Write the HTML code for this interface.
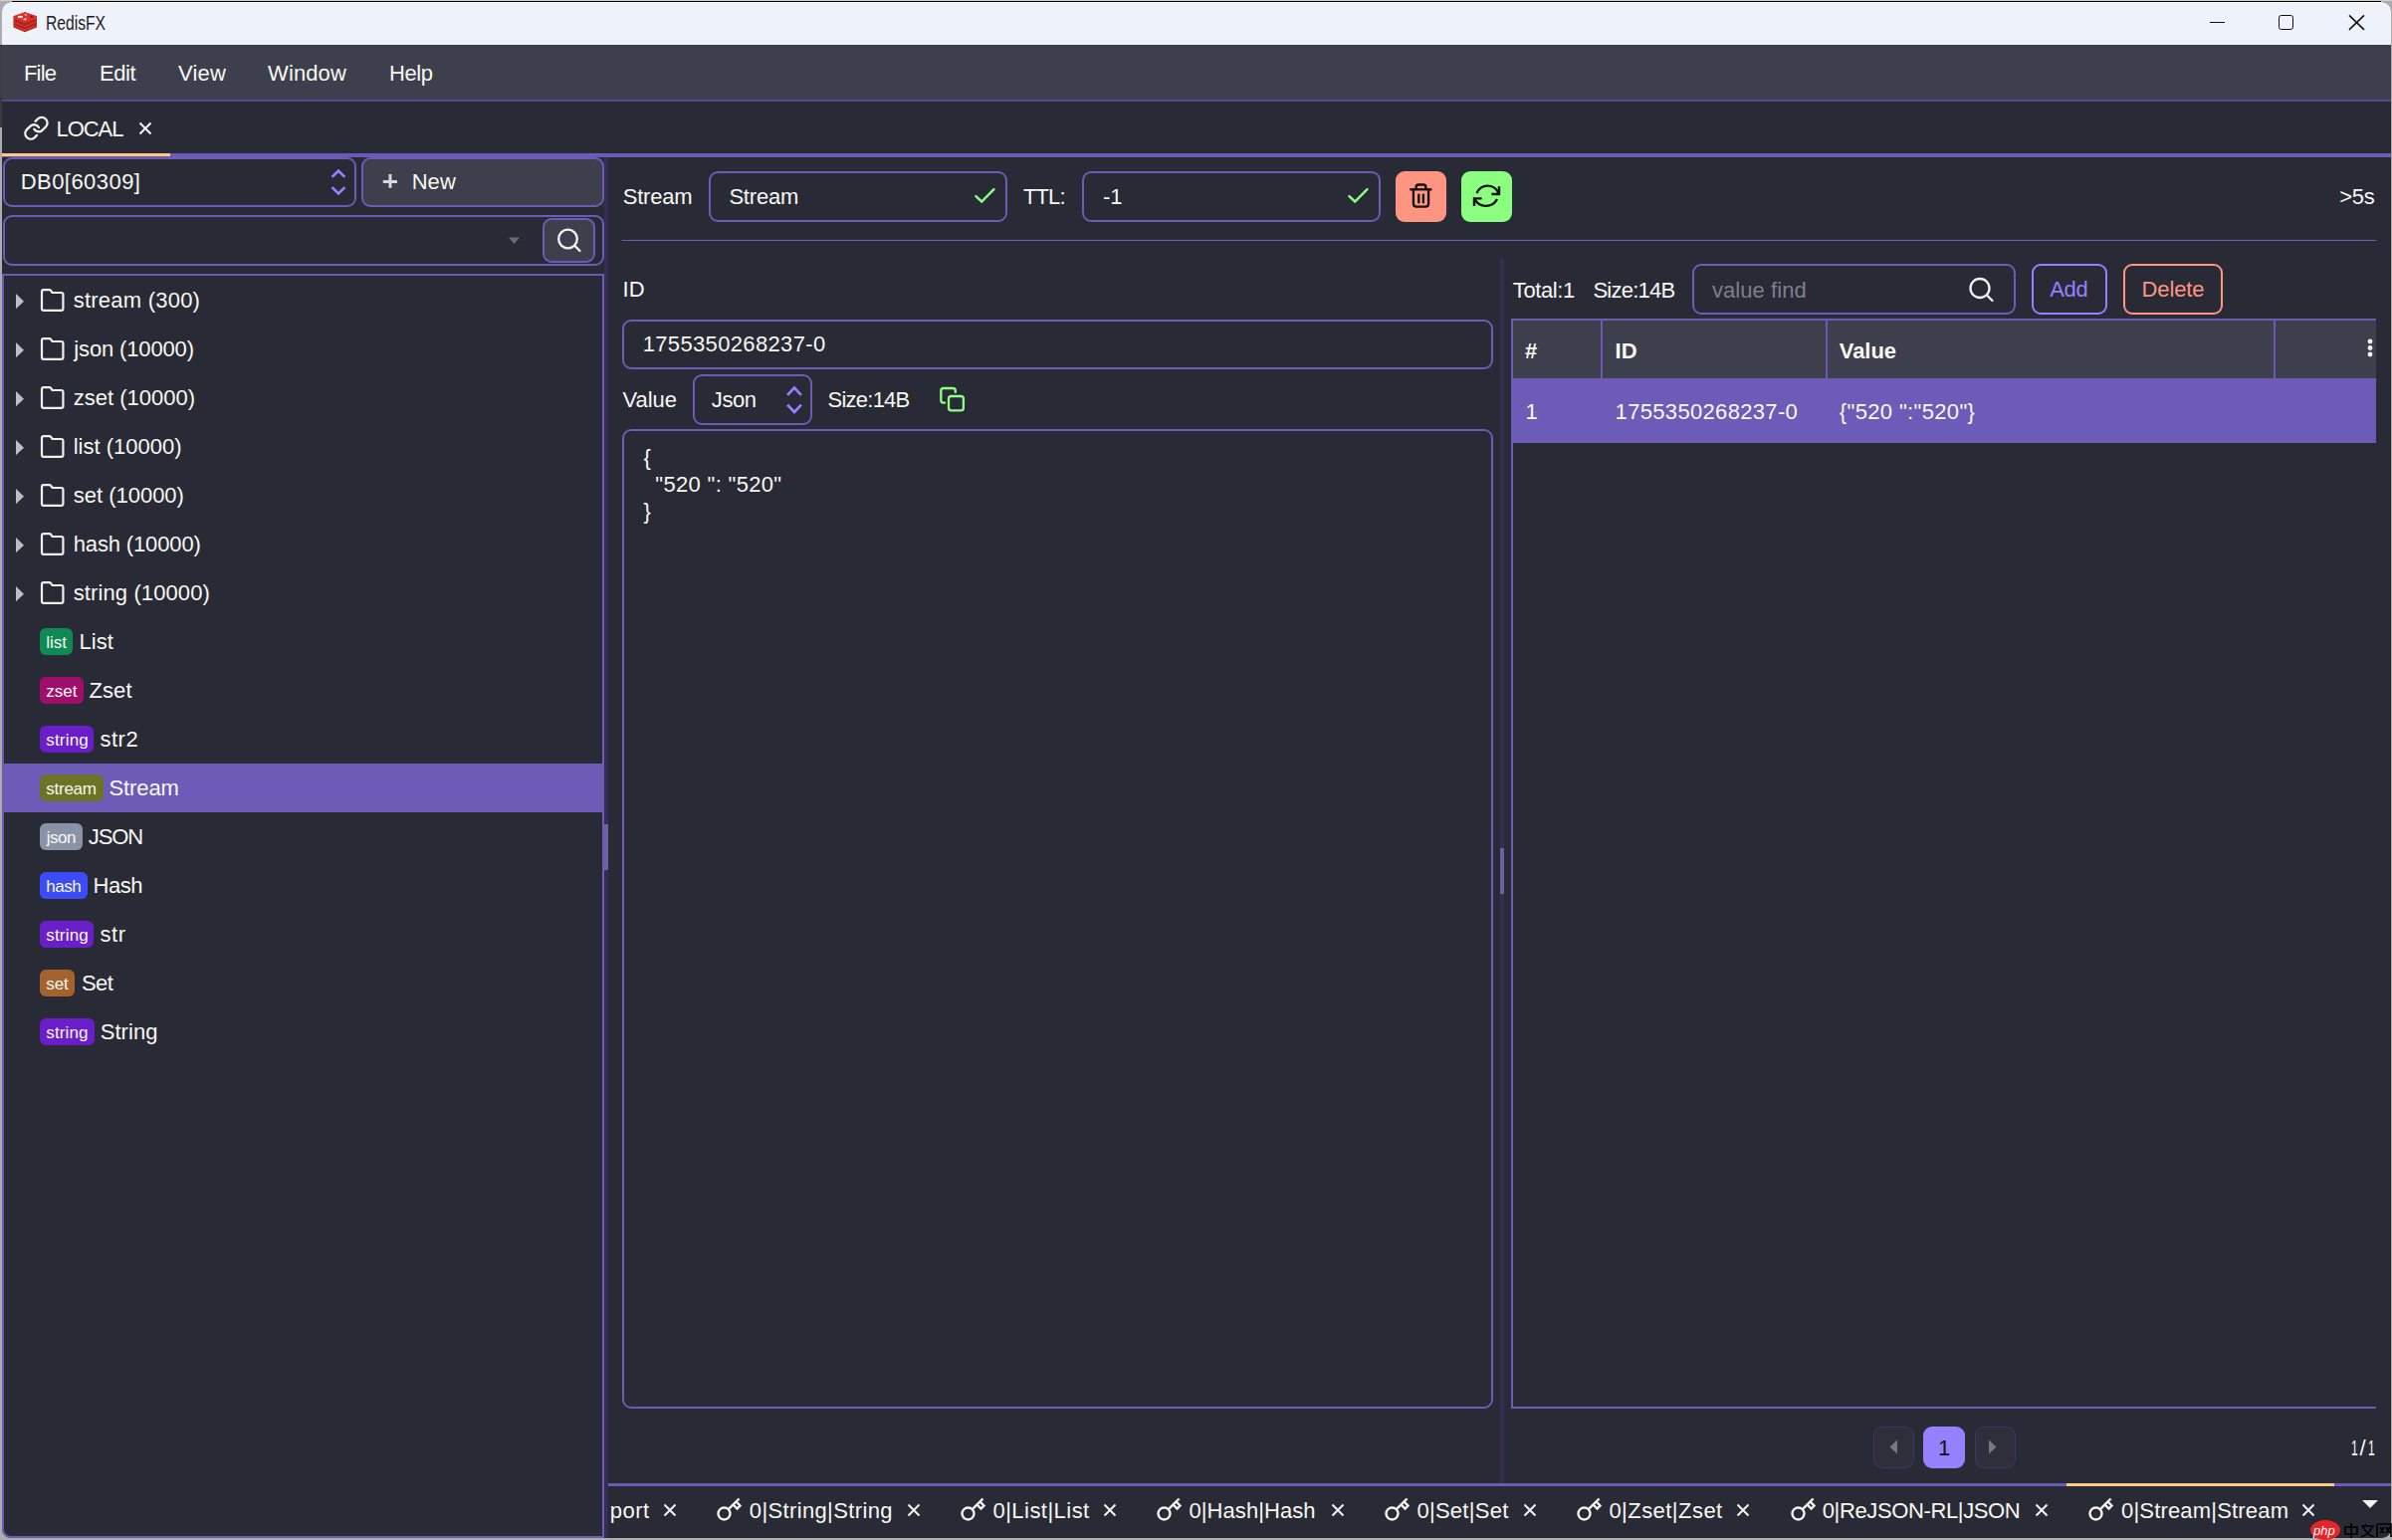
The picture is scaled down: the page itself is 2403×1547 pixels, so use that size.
<!DOCTYPE html>
<html><head><meta charset="utf-8"><title>RedisFX</title>
<style>
html,body{margin:0;padding:0;}
body{width:2403px;height:1547px;overflow:hidden;position:relative;background:#adadad;font-family:"Liberation Sans",sans-serif;}
.t{position:absolute;white-space:pre;line-height:1;}
.r{position:absolute;box-sizing:border-box;}
.s{position:absolute;overflow:visible;}
</style></head><body>
<div class="r" style="left:2px;top:2px;width:2400px;height:1543px;background:#282a36;border-radius:9px;"></div>
<div class="r" style="left:0.00px;top:0.00px;width:2403.00px;height:1.00px;background:#d0d0d0;"></div>
<div class="r" style="left:0.00px;top:45.00px;width:2.00px;height:83.00px;background:#3b3b3d;"></div>
<div class="r" style="left:2px;top:2px;width:2400px;height:43px;background:#eef2fa;border-radius:9px 9px 0 0;"></div>
<div class="r" style="left:12.00px;top:1.00px;width:2380.00px;height:1.00px;background:#000;"></div>
<div class="r" style="left:12.00px;top:2.00px;width:2380.00px;height:1.00px;background:#ffffff;"></div>
<svg class="s" style="left:10.00px;top:8.00px;" width="32" height="28" viewBox="0 0 32 28"><g>
<polygon points="3.6,8.2 15,4.2 26.9,8.2 26.9,19.6 15,24.2 3.6,19.6" fill="#a82322"/>
<polygon points="3.6,8.2 15,4.2 26.9,8.2 26.9,10.8 15,15.2 3.6,10.8" fill="#dc3229"/>
<polygon points="3.6,12.8 15,17.4 26.9,12.8 26.9,14.8 15,19.4 3.6,14.8" fill="#d62e28"/>
<polygon points="3.6,16.6 15,21.2 26.9,16.6 26.9,18.6 15,23.2 3.6,18.6" fill="#d62e28"/>
<ellipse cx="10.4" cy="8.9" rx="2.6" ry="1.1" fill="#fff"/>
<polygon points="14.2,6.2 17.1,6.5 16,7.9" fill="#fbe4e4"/>
<polygon points="12.7,11.3 16.9,10.2 15.8,12.5" fill="#fff"/>
<circle cx="21.7" cy="8.9" r="1.1" fill="#7a1512"/>
</g></svg>
<div class="t" style="left:46.00px;top:12.77px;font-size:20px;letter-spacing:0.000px;color:#1e1e1e;transform:scaleX(0.7818);transform-origin:0.00px 0;">RedisFX</div>
<div class="r" style="left:2220.00px;top:22.00px;width:15.00px;height:1.00px;background:#111;"></div>
<div class="r" style="left:2289px;top:15px;width:15px;height:15px;border:1.9px solid #111;border-radius:2.8px;box-sizing:border-box"></div>
<svg class="s" style="left:2358.00px;top:13.00px;" width="20" height="20" viewBox="0 0 20 20"><path d="M2 2.4 L17 16.9 M17 2.4 L2 16.9" stroke="#111" stroke-width="1.5"/></svg>
<div class="r" style="left:2.00px;top:45.00px;width:2400.00px;height:55.00px;background:#3d3f4d;"></div>
<div class="r" style="left:2.00px;top:100.00px;width:2400.00px;height:2.00px;background:#54488a;"></div>
<div class="t" style="left:24.00px;top:63.08px;font-size:22px;letter-spacing:-0.833px;color:#f8f8f2;">File</div>
<div class="t" style="left:100.00px;top:63.08px;font-size:22px;letter-spacing:-0.458px;color:#f8f8f2;">Edit</div>
<div class="t" style="left:179.00px;top:63.08px;font-size:22px;letter-spacing:0.208px;color:#f8f8f2;">View</div>
<div class="t" style="left:269.00px;top:63.08px;font-size:22px;letter-spacing:0.125px;color:#f8f8f2;">Window</div>
<div class="t" style="left:391.00px;top:63.08px;font-size:22px;letter-spacing:-0.417px;color:#f8f8f2;">Help</div>
<div class="r" style="left:2.00px;top:154.00px;width:2400.00px;height:4.00px;background:#6b5bb6;"></div>
<div class="r" style="left:2.00px;top:154.00px;width:169.00px;height:3.00px;background:#ffca80;"></div>
<svg class="s" style="left:18.00px;top:110.00px;" width="40" height="36" viewBox="0 0 40 36"><g fill="none" stroke="#f4f4ee" stroke-width="2.3" stroke-linecap="round">
<path d="M17.5 11.8 L19.9 9.5 A5.6 5.6 0 0 1 27.9 17.5 L24.1 21.2 A5.5 5.5 0 0 1 16.2 19.7"/>
<path d="M21 18 A5.5 5.5 0 0 0 12.6 16.6 L8.7 20.4 A5.6 5.6 0 0 0 16.6 28.3 L19 25.9"/></g></svg>
<div class="t" style="left:56.50px;top:119.48px;font-size:22px;letter-spacing:-1.056px;color:#f8f8f2;">LOCAL</div>
<svg class="s" style="left:138.00px;top:121.00px;" width="16" height="16" viewBox="0 0 16 16"><path d="M2.5 2.5 L13.5 13.5 M13.5 2.5 L2.5 13.5" stroke="#f4f4ee" stroke-width="2"/></svg>
<div class="r" style="left:2.50px;top:158.00px;width:355.50px;height:49.80px;background:#282a36;border:2px solid #6b5bb6;border-radius:9px;"></div>
<div class="t" style="left:20.70px;top:172.28px;font-size:22px;letter-spacing:0.450px;color:#f8f8f2;">DB0[60309]</div>
<svg class="s" style="left:330.00px;top:167.00px;" width="20" height="32" viewBox="0 0 20 32"><g fill="none" stroke="#9580ff" stroke-width="2.6" stroke-linecap="square"><path d="M4.5 10 L10 4.5 L15.5 10"/><path d="M4.5 22 L10 27.5 L15.5 22"/></g></svg>
<div class="r" style="left:363.00px;top:158.00px;width:244.00px;height:49.80px;background:#3d3f4d;border:2px solid #6b5bb6;border-radius:9px;"></div>
<svg class="s" style="left:383.00px;top:174.00px;" width="18" height="18" viewBox="0 0 18 18"><path d="M9 1 V14.8 M1.8 8.6 H16" stroke="#d8d8d6" stroke-width="3"/></svg>
<div class="t" style="left:413.70px;top:172.08px;font-size:22px;letter-spacing:0.037px;color:#f8f8f2;">New</div>
<div class="r" style="left:2.50px;top:216.00px;width:604.50px;height:50.50px;background:#282a36;border:2px solid #6b5bb6;border-radius:9px;"></div>
<svg class="s" style="left:508.00px;top:236.00px;" width="18" height="12" viewBox="0 0 18 12"><path d="M3 2.5 L14 2.5 L8.5 9Z" fill="#6a6a72"/></svg>
<div class="r" style="left:545.00px;top:219.30px;width:53.00px;height:44.70px;background:#3d3f4d;border:2px solid #6b5bb6;border-radius:9px;"></div>
<svg class="s" style="left:556.00px;top:226.00px;" width="30" height="30" viewBox="0 0 30 30"><g fill="none" stroke="#f4f4ee" stroke-width="2.3"><circle cx="14.5" cy="14" r="9.3"/><path d="M21.5 21 L26.5 26" stroke-linecap="round"/></g></svg>
<div class="r" style="left:2px;top:275px;width:605px;height:1270px;border:2px solid #6b5bb6;border-radius:0 0 0 9px;box-sizing:border-box"></div>
<div class="r" style="left:607.00px;top:158.00px;width:4.00px;height:1387.00px;background:#332e52;"></div>
<div class="r" style="left:607.00px;top:828.00px;width:4.00px;height:46.00px;background:#6a62a2;"></div>
<svg class="s" style="left:14.00px;top:294.00px;" width="12" height="18" viewBox="0 0 12 18"><path d="M2 1 L10 8.8 L2 16.2Z" fill="#bdbdc5"/></svg>
<svg class="s" style="left:39.30px;top:289.00px;" width="27" height="25" viewBox="0 0 27 25"><path d="M3 4 Q3 2.2 4.8 2.2 L10.5 2.2 Q11.6 2.2 12.3 3.2 L13.6 5 L22.5 5 Q24.4 5 24.4 7 L24.4 21 Q24.4 22.8 22.5 22.8 L4.8 22.8 Q3 22.8 3 21Z" fill="none" stroke="#f0f0ea" stroke-width="2.2" stroke-linejoin="round"/></svg>
<div class="t" style="left:73.70px;top:291.08px;font-size:22px;letter-spacing:0.232px;color:#f8f8f2;">stream (300)</div>
<svg class="s" style="left:14.00px;top:343.00px;" width="12" height="18" viewBox="0 0 12 18"><path d="M2 1 L10 8.8 L2 16.2Z" fill="#bdbdc5"/></svg>
<svg class="s" style="left:39.30px;top:338.00px;" width="27" height="25" viewBox="0 0 27 25"><path d="M3 4 Q3 2.2 4.8 2.2 L10.5 2.2 Q11.6 2.2 12.3 3.2 L13.6 5 L22.5 5 Q24.4 5 24.4 7 L24.4 21 Q24.4 22.8 22.5 22.8 L4.8 22.8 Q3 22.8 3 21Z" fill="none" stroke="#f0f0ea" stroke-width="2.2" stroke-linejoin="round"/></svg>
<div class="t" style="left:74.33px;top:340.08px;font-size:22px;letter-spacing:-0.152px;color:#f8f8f2;">json (10000)</div>
<svg class="s" style="left:14.00px;top:392.00px;" width="12" height="18" viewBox="0 0 12 18"><path d="M2 1 L10 8.8 L2 16.2Z" fill="#bdbdc5"/></svg>
<svg class="s" style="left:39.30px;top:387.00px;" width="27" height="25" viewBox="0 0 27 25"><path d="M3 4 Q3 2.2 4.8 2.2 L10.5 2.2 Q11.6 2.2 12.3 3.2 L13.6 5 L22.5 5 Q24.4 5 24.4 7 L24.4 21 Q24.4 22.8 22.5 22.8 L4.8 22.8 Q3 22.8 3 21Z" fill="none" stroke="#f0f0ea" stroke-width="2.2" stroke-linejoin="round"/></svg>
<div class="t" style="left:73.70px;top:389.08px;font-size:22px;letter-spacing:0.005px;color:#f8f8f2;">zset (10000)</div>
<svg class="s" style="left:14.00px;top:441.00px;" width="12" height="18" viewBox="0 0 12 18"><path d="M2 1 L10 8.8 L2 16.2Z" fill="#bdbdc5"/></svg>
<svg class="s" style="left:39.30px;top:436.00px;" width="27" height="25" viewBox="0 0 27 25"><path d="M3 4 Q3 2.2 4.8 2.2 L10.5 2.2 Q11.6 2.2 12.3 3.2 L13.6 5 L22.5 5 Q24.4 5 24.4 7 L24.4 21 Q24.4 22.8 22.5 22.8 L4.8 22.8 Q3 22.8 3 21Z" fill="none" stroke="#f0f0ea" stroke-width="2.2" stroke-linejoin="round"/></svg>
<div class="t" style="left:73.70px;top:438.08px;font-size:22px;letter-spacing:0.011px;color:#f8f8f2;">list (10000)</div>
<svg class="s" style="left:14.00px;top:490.00px;" width="12" height="18" viewBox="0 0 12 18"><path d="M2 1 L10 8.8 L2 16.2Z" fill="#bdbdc5"/></svg>
<svg class="s" style="left:39.30px;top:485.00px;" width="27" height="25" viewBox="0 0 27 25"><path d="M3 4 Q3 2.2 4.8 2.2 L10.5 2.2 Q11.6 2.2 12.3 3.2 L13.6 5 L22.5 5 Q24.4 5 24.4 7 L24.4 21 Q24.4 22.8 22.5 22.8 L4.8 22.8 Q3 22.8 3 21Z" fill="none" stroke="#f0f0ea" stroke-width="2.2" stroke-linejoin="round"/></svg>
<div class="t" style="left:73.70px;top:487.08px;font-size:22px;letter-spacing:-0.005px;color:#f8f8f2;">set (10000)</div>
<svg class="s" style="left:14.00px;top:539.00px;" width="12" height="18" viewBox="0 0 12 18"><path d="M2 1 L10 8.8 L2 16.2Z" fill="#bdbdc5"/></svg>
<svg class="s" style="left:39.30px;top:534.00px;" width="27" height="25" viewBox="0 0 27 25"><path d="M3 4 Q3 2.2 4.8 2.2 L10.5 2.2 Q11.6 2.2 12.3 3.2 L13.6 5 L22.5 5 Q24.4 5 24.4 7 L24.4 21 Q24.4 22.8 22.5 22.8 L4.8 22.8 Q3 22.8 3 21Z" fill="none" stroke="#f0f0ea" stroke-width="2.2" stroke-linejoin="round"/></svg>
<div class="t" style="left:73.70px;top:536.08px;font-size:22px;letter-spacing:-0.139px;color:#f8f8f2;">hash (10000)</div>
<svg class="s" style="left:14.00px;top:588.00px;" width="12" height="18" viewBox="0 0 12 18"><path d="M2 1 L10 8.8 L2 16.2Z" fill="#bdbdc5"/></svg>
<svg class="s" style="left:39.30px;top:583.00px;" width="27" height="25" viewBox="0 0 27 25"><path d="M3 4 Q3 2.2 4.8 2.2 L10.5 2.2 Q11.6 2.2 12.3 3.2 L13.6 5 L22.5 5 Q24.4 5 24.4 7 L24.4 21 Q24.4 22.8 22.5 22.8 L4.8 22.8 Q3 22.8 3 21Z" fill="none" stroke="#f0f0ea" stroke-width="2.2" stroke-linejoin="round"/></svg>
<div class="t" style="left:73.70px;top:585.08px;font-size:22px;letter-spacing:0.112px;color:#f8f8f2;">string (10000)</div>
<div class="r" style="left:40.00px;top:631.00px;width:33.30px;height:27.00px;background:#0f8a55;border-radius:6px;"></div>
<div class="t" style="left:46.30px;top:636.91px;font-size:17px;letter-spacing:-0.017px;color:#f8f8f2;">list</div>
<div class="t" style="left:79.50px;top:634.08px;font-size:22px;letter-spacing:0.017px;color:#f8f8f2;">List</div>
<div class="r" style="left:40.00px;top:680.00px;width:43.50px;height:27.00px;background:#a00e6b;border-radius:6px;"></div>
<div class="t" style="left:46.30px;top:685.91px;font-size:17px;letter-spacing:-0.042px;color:#f8f8f2;">zset</div>
<div class="t" style="left:89.50px;top:683.08px;font-size:22px;letter-spacing:0.083px;color:#f8f8f2;">Zset</div>
<div class="r" style="left:40.00px;top:729.00px;width:54.00px;height:27.00px;background:#6a1ec9;border-radius:6px;"></div>
<div class="t" style="left:46.30px;top:734.91px;font-size:17px;letter-spacing:0.175px;color:#f8f8f2;">string</div>
<div class="t" style="left:100.40px;top:732.08px;font-size:22px;letter-spacing:0.558px;color:#f8f8f2;">str2</div>
<div class="r" style="left:4.00px;top:767.00px;width:601.00px;height:49.00px;background:#6c5cb8;"></div>
<div class="r" style="left:40.00px;top:778.00px;width:63.70px;height:27.00px;background:#6b7325;border-radius:6px;"></div>
<div class="t" style="left:46.30px;top:783.91px;font-size:17px;letter-spacing:-0.260px;color:#f8f8f2;">stream</div>
<div class="t" style="left:109.40px;top:781.08px;font-size:22px;letter-spacing:-0.075px;color:#f8f8f2;">Stream</div>
<div class="r" style="left:40.00px;top:827.00px;width:42.80px;height:27.00px;background:#8a93a6;border-radius:6px;"></div>
<div class="t" style="left:46.80px;top:832.91px;font-size:17px;letter-spacing:-0.550px;color:#f8f8f2;">json</div>
<div class="t" style="left:88.80px;top:830.08px;font-size:22px;letter-spacing:-1.142px;color:#f8f8f2;">JSON</div>
<div class="r" style="left:40.00px;top:876.00px;width:47.60px;height:27.00px;background:#3b4bf8;border-radius:6px;"></div>
<div class="t" style="left:46.30px;top:881.91px;font-size:17px;letter-spacing:-0.492px;color:#f8f8f2;">hash</div>
<div class="t" style="left:93.50px;top:879.08px;font-size:22px;letter-spacing:-0.492px;color:#f8f8f2;">Hash</div>
<div class="r" style="left:40.00px;top:925.00px;width:54.00px;height:27.00px;background:#6a1ec9;border-radius:6px;"></div>
<div class="t" style="left:46.30px;top:930.91px;font-size:17px;letter-spacing:0.175px;color:#f8f8f2;">string</div>
<div class="t" style="left:100.40px;top:928.08px;font-size:22px;letter-spacing:0.650px;color:#f8f8f2;">str</div>
<div class="r" style="left:40.00px;top:974.00px;width:35.00px;height:27.00px;background:#a4622c;border-radius:6px;"></div>
<div class="t" style="left:46.30px;top:979.91px;font-size:17px;letter-spacing:-0.112px;color:#f8f8f2;">set</div>
<div class="t" style="left:82.00px;top:977.08px;font-size:22px;letter-spacing:-0.550px;color:#f8f8f2;">Set</div>
<div class="r" style="left:40.00px;top:1023.00px;width:54.50px;height:27.00px;background:#6a1ec9;border-radius:6px;"></div>
<div class="t" style="left:46.30px;top:1028.91px;font-size:17px;letter-spacing:0.115px;color:#f8f8f2;">string</div>
<div class="t" style="left:100.80px;top:1026.08px;font-size:22px;letter-spacing:0.020px;color:#f8f8f2;">String</div>
<div class="t" style="left:625.80px;top:187.38px;font-size:22px;letter-spacing:-0.235px;color:#f8f8f2;">Stream</div>
<div class="r" style="left:712.00px;top:172.00px;width:300.00px;height:50.50px;border:2px solid #6b5bb6;border-radius:9px;"></div>
<div class="t" style="left:732.40px;top:187.38px;font-size:22px;letter-spacing:-0.195px;color:#f8f8f2;">Stream</div>
<svg class="s" style="left:976.00px;top:186.00px;" width="26" height="21" viewBox="0 0 26 21"><path d="M4.4 11.1 L10.2 16.5 L22.5 4.2" fill="none" stroke="#8aff80" stroke-width="2.4" stroke-linecap="round"/></svg>
<div class="t" style="left:1028.00px;top:187.38px;font-size:22px;letter-spacing:-0.883px;color:#f8f8f2;">TTL:</div>
<div class="r" style="left:1087.00px;top:172.00px;width:300.00px;height:50.50px;border:2px solid #6b5bb6;border-radius:9px;"></div>
<div class="t" style="left:1108.00px;top:187.38px;font-size:22px;letter-spacing:0.000px;color:#f8f8f2;">-1</div>
<svg class="s" style="left:1351.00px;top:186.00px;" width="26" height="21" viewBox="0 0 26 21"><path d="M4.4 11.1 L10.2 16.5 L22.5 4.2" fill="none" stroke="#8aff80" stroke-width="2.4" stroke-linecap="round"/></svg>
<div class="r" style="left:1402.00px;top:172.00px;width:51.00px;height:51.00px;background:#ff9580;border-radius:9px;"></div>
<svg class="s" style="left:1402.00px;top:172.00px;" width="51" height="51" viewBox="0 0 51 51"><g fill="none" stroke="#111" stroke-width="2.3" stroke-linejoin="round"><path d="M14.3 18.3 H36.4"/><path d="M20.6 18.3 V16 Q20.6 13.5 23.1 13.5 H27.9 Q30.4 13.5 30.4 16 V18.3"/><path d="M17.9 18.3 V32.5 Q17.9 35.6 21 35.6 H30 Q33.1 35.6 33.1 32.5 V18.3"/><path d="M23.3 23.6 V31.4 M27.9 23.6 V31.4" stroke-linecap="round"/></g></svg>
<div class="r" style="left:1468.00px;top:172.00px;width:51.00px;height:51.00px;background:#8aff80;border-radius:9px;"></div>
<svg class="s" style="left:1468.00px;top:172.00px;" width="51" height="51" viewBox="0 0 51 51"><g fill="none" stroke="#111" stroke-width="2.4"><path d="M15.6 22.1 A11.65 11.65 0 0 1 37.6 22.8"/><path d="M38 15.3 V23 H30.4"/><path d="M36 28 A12.6 12.6 0 0 1 13.4 27.7"/><path d="M13 35 V27.4 H20.6"/></g></svg>
<div class="t" style="left:2350.30px;top:187.18px;font-size:22px;letter-spacing:-0.312px;color:#f8f8f2;">&gt;5s</div>
<div class="r" style="left:625.00px;top:240.50px;width:1762.00px;height:1.20px;background:#6b5bb6;"></div>
<div class="t" style="left:625.60px;top:280.08px;font-size:22px;letter-spacing:0.000px;color:#f8f8f2;">ID</div>
<div class="r" style="left:625.00px;top:321.00px;width:875.00px;height:50.00px;border:2px solid #6b5bb6;border-radius:9px;"></div>
<div class="t" style="left:645.70px;top:335.08px;font-size:22px;letter-spacing:0.348px;color:#f8f8f2;">1755350268237-0</div>
<div class="t" style="left:625.60px;top:391.08px;font-size:22px;letter-spacing:-0.056px;color:#f8f8f2;">Value</div>
<div class="r" style="left:696.30px;top:376.40px;width:119.40px;height:50.20px;border:2px solid #6b5bb6;border-radius:9px;"></div>
<div class="t" style="left:714.80px;top:391.08px;font-size:22px;letter-spacing:-0.400px;color:#f8f8f2;">Json</div>
<svg class="s" style="left:787.00px;top:384.00px;" width="22" height="36" viewBox="0 0 22 36"><g fill="none" stroke="#9580ff" stroke-width="2.6" stroke-linecap="square"><path d="M5 12 L11 5.5 L17 12"/><path d="M5 23.5 L11 30 L17 23.5"/></g></svg>
<div class="t" style="left:831.60px;top:391.08px;font-size:22px;letter-spacing:-0.771px;color:#f8f8f2;">Size:14B</div>
<svg class="s" style="left:940.00px;top:385.00px;" width="32" height="32" viewBox="0 0 32 32"><g fill="none" stroke="#8aff80" stroke-width="2.3" stroke-linecap="round"><path d="M19.8 9.1 V7.5 Q19.8 5 17.3 5 H7.8 Q5.3 5 5.3 7.5 V17.1 Q5.3 19.6 7.8 19.6 H9.1"/><rect x="13" y="13" width="14.9" height="14.4" rx="2.6"/></g></svg>
<div class="r" style="left:625.00px;top:431.00px;width:875.00px;height:983.50px;border:2px solid #6b5bb6;border-radius:9px;"></div>
<div class="t" style="left:646.40px;top:449.08px;font-size:22px;letter-spacing:0.000px;color:#f8f8f2;">{</div>
<div class="t" style="left:658.30px;top:476.08px;font-size:22px;letter-spacing:0.325px;color:#f8f8f2;">&quot;520 &quot;: &quot;520&quot;</div>
<div class="t" style="left:646.40px;top:503.08px;font-size:22px;letter-spacing:0.000px;color:#f8f8f2;">}</div>
<div class="r" style="left:1507.00px;top:260.00px;width:4.00px;height:1230.00px;background:#332e52;"></div>
<div class="r" style="left:1507.00px;top:852.00px;width:4.00px;height:46.00px;background:#6a62a2;"></div>
<div class="t" style="left:1519.80px;top:280.68px;font-size:22px;letter-spacing:-0.396px;color:#f8f8f2;">Total:1</div>
<div class="t" style="left:1600.40px;top:280.68px;font-size:22px;letter-spacing:-0.757px;color:#f8f8f2;">Size:14B</div>
<div class="r" style="left:1699.60px;top:265.20px;width:325.80px;height:50.60px;border:2px solid #6b5bb6;border-radius:9px;"></div>
<div class="t" style="left:1720.00px;top:280.68px;font-size:22px;letter-spacing:0.064px;color:#7e7f88;">value find</div>
<svg class="s" style="left:1970.00px;top:270.00px;" width="40" height="40" viewBox="0 0 40 40"><g fill="none" stroke="#f4f4ee" stroke-width="2.3"><circle cx="19" cy="19.5" r="9.5"/><path d="M26 26.5 L31.5 32" stroke-linecap="round"/></g></svg>
<div class="r" style="left:2040.50px;top:265.40px;width:76.90px;height:50.40px;border:2px solid #9580ff;border-radius:9px;"></div>
<div class="t" style="left:2059.20px;top:279.98px;font-size:22px;letter-spacing:-0.312px;color:#9580ff;">Add</div>
<div class="r" style="left:2132.60px;top:265.40px;width:100.70px;height:50.40px;border:2px solid #ff9580;border-radius:9px;"></div>
<div class="t" style="left:2151.60px;top:279.98px;font-size:22px;letter-spacing:-0.125px;color:#ff9580;">Delete</div>
<div class="r" style="left:1518.30px;top:320.00px;width:868.70px;height:1094.80px;border:2px solid #6b5bb6;border-right:0;"></div>
<div class="r" style="left:1519.80px;top:321.50px;width:867.20px;height:58.50px;background:#3d3f4d;"></div>
<div class="r" style="left:1608.40px;top:322.00px;width:2.00px;height:58.00px;background:#6b5bb6;"></div>
<div class="r" style="left:1833.50px;top:322.00px;width:2.00px;height:58.00px;background:#6b5bb6;"></div>
<div class="r" style="left:2283.50px;top:322.00px;width:2.00px;height:58.00px;background:#6b5bb6;"></div>
<div class="t" style="left:1531.90px;top:341.68px;font-size:22px;letter-spacing:0.000px;color:#f8f8f2;font-weight:700;">#</div>
<div class="t" style="left:1622.60px;top:341.68px;font-size:22px;letter-spacing:0.000px;color:#f8f8f2;font-weight:700;">ID</div>
<div class="t" style="left:1847.80px;top:341.68px;font-size:22px;letter-spacing:-0.075px;color:#f8f8f2;font-weight:700;">Value</div>
<svg class="s" style="left:2375.00px;top:338.00px;" width="12" height="24" viewBox="0 0 12 24"><g fill="#f4f4ee"><circle cx="6" cy="5" r="2.4"/><circle cx="6" cy="11.5" r="2.4"/><circle cx="6" cy="18" r="2.4"/></g></svg>
<div class="r" style="left:1519.80px;top:380.00px;width:867.20px;height:64.70px;background:#6c5cb8;"></div>
<div class="t" style="left:1532.60px;top:402.68px;font-size:22px;letter-spacing:0.000px;color:#f8f8f2;">1</div>
<div class="t" style="left:1622.60px;top:402.68px;font-size:22px;letter-spacing:0.327px;color:#f8f8f2;">1755350268237-0</div>
<div class="t" style="left:1847.80px;top:402.68px;font-size:22px;letter-spacing:0.352px;color:#f8f8f2;">{&quot;520 &quot;:&quot;520&quot;}</div>
<div class="r" style="left:1882.00px;top:1433.30px;width:41.20px;height:41.50px;background:#2e2f3b;border:1.5px solid #3b3668;border-radius:9px;"></div>
<div class="r" style="left:1932.40px;top:1433.30px;width:42.10px;height:41.50px;background:#9580ff;border-radius:9px;"></div>
<div class="r" style="left:1984.00px;top:1433.30px;width:41.00px;height:41.50px;background:#2e2f3b;border:1.5px solid #3b3668;border-radius:9px;"></div>
<svg class="s" style="left:1896.00px;top:1445.00px;" width="12" height="18" viewBox="0 0 12 18"><path d="M10 1.5 L2.5 8.5 L10 15.5Z" fill="#77777e"/></svg>
<svg class="s" style="left:1996.00px;top:1445.00px;" width="12" height="18" viewBox="0 0 12 18"><path d="M2 1.5 L9.5 8.5 L2 15.5Z" fill="#77777e"/></svg>
<div class="t" style="left:1947.00px;top:1444.08px;font-size:22px;letter-spacing:0.000px;color:#111;">1</div>
<div class="t" style="left:2362.30px;top:1444.08px;font-size:22px;letter-spacing:0.000px;color:#f8f8f2;transform:scaleX(0.5469);transform-origin:0.00px 0;">1</div>
<div class="t" style="left:2370.60px;top:1444.08px;font-size:22px;letter-spacing:0.000px;color:#f8f8f2;">/</div>
<div class="t" style="left:2378.80px;top:1444.08px;font-size:22px;letter-spacing:0.000px;color:#f8f8f2;transform:scaleX(0.5469);transform-origin:0.00px 0;">1</div>
<div class="r" style="left:611.00px;top:1490.00px;width:1791.00px;height:3.00px;background:#6b5bb6;"></div>
<div class="r" style="left:2076.00px;top:1490.00px;width:269.00px;height:3.00px;background:#ffca80;"></div>
<div class="t" style="left:612.80px;top:1507.08px;font-size:22px;letter-spacing:0.442px;color:#f8f8f2;">port</div>
<svg class="s" style="left:665.00px;top:1509.00px;" width="17" height="17" viewBox="0 0 17 17"><path d="M2.5 2.5 L13.5 13.5 M13.5 2.5 L2.5 13.5" stroke="#f4f4ee" stroke-width="2"/></svg>
<svg class="s" style="left:719.00px;top:1503.00px;" width="28" height="28" viewBox="0 0 28 28"><g fill="none" stroke="#f4f4ee" stroke-width="2.4"><circle cx="8.5" cy="17.5" r="6"/><path d="M12.8 13.2 L23.5 2.5"/><path d="M17.5 8.5 L21.5 12.5 L24.5 9.5 L20.5 5.5"/></g></svg>
<div class="t" style="left:752.80px;top:1507.08px;font-size:22px;letter-spacing:0.363px;color:#f8f8f2;">0|String|String</div>
<svg class="s" style="left:910.00px;top:1509.00px;" width="17" height="17" viewBox="0 0 17 17"><path d="M2.5 2.5 L13.5 13.5 M13.5 2.5 L2.5 13.5" stroke="#f4f4ee" stroke-width="2"/></svg>
<svg class="s" style="left:964.00px;top:1503.00px;" width="28" height="28" viewBox="0 0 28 28"><g fill="none" stroke="#f4f4ee" stroke-width="2.4"><circle cx="8.5" cy="17.5" r="6"/><path d="M12.8 13.2 L23.5 2.5"/><path d="M17.5 8.5 L21.5 12.5 L24.5 9.5 L20.5 5.5"/></g></svg>
<div class="t" style="left:997.50px;top:1507.08px;font-size:22px;letter-spacing:0.458px;color:#f8f8f2;">0|List|List</div>
<svg class="s" style="left:1107.00px;top:1509.00px;" width="17" height="17" viewBox="0 0 17 17"><path d="M2.5 2.5 L13.5 13.5 M13.5 2.5 L2.5 13.5" stroke="#f4f4ee" stroke-width="2"/></svg>
<svg class="s" style="left:1161.00px;top:1503.00px;" width="28" height="28" viewBox="0 0 28 28"><g fill="none" stroke="#f4f4ee" stroke-width="2.4"><circle cx="8.5" cy="17.5" r="6"/><path d="M12.8 13.2 L23.5 2.5"/><path d="M17.5 8.5 L21.5 12.5 L24.5 9.5 L20.5 5.5"/></g></svg>
<div class="t" style="left:1194.50px;top:1507.08px;font-size:22px;letter-spacing:0.062px;color:#f8f8f2;">0|Hash|Hash</div>
<svg class="s" style="left:1336.00px;top:1509.00px;" width="17" height="17" viewBox="0 0 17 17"><path d="M2.5 2.5 L13.5 13.5 M13.5 2.5 L2.5 13.5" stroke="#f4f4ee" stroke-width="2"/></svg>
<svg class="s" style="left:1390.00px;top:1503.00px;" width="28" height="28" viewBox="0 0 28 28"><g fill="none" stroke="#f4f4ee" stroke-width="2.4"><circle cx="8.5" cy="17.5" r="6"/><path d="M12.8 13.2 L23.5 2.5"/><path d="M17.5 8.5 L21.5 12.5 L24.5 9.5 L20.5 5.5"/></g></svg>
<div class="t" style="left:1423.40px;top:1507.08px;font-size:22px;letter-spacing:0.281px;color:#f8f8f2;">0|Set|Set</div>
<svg class="s" style="left:1528.50px;top:1509.00px;" width="17" height="17" viewBox="0 0 17 17"><path d="M2.5 2.5 L13.5 13.5 M13.5 2.5 L2.5 13.5" stroke="#f4f4ee" stroke-width="2"/></svg>
<svg class="s" style="left:1583.00px;top:1503.00px;" width="28" height="28" viewBox="0 0 28 28"><g fill="none" stroke="#f4f4ee" stroke-width="2.4"><circle cx="8.5" cy="17.5" r="6"/><path d="M12.8 13.2 L23.5 2.5"/><path d="M17.5 8.5 L21.5 12.5 L24.5 9.5 L20.5 5.5"/></g></svg>
<div class="t" style="left:1616.40px;top:1507.08px;font-size:22px;letter-spacing:0.455px;color:#f8f8f2;">0|Zset|Zset</div>
<svg class="s" style="left:1743.00px;top:1509.00px;" width="17" height="17" viewBox="0 0 17 17"><path d="M2.5 2.5 L13.5 13.5 M13.5 2.5 L2.5 13.5" stroke="#f4f4ee" stroke-width="2"/></svg>
<svg class="s" style="left:1797.60px;top:1503.00px;" width="28" height="28" viewBox="0 0 28 28"><g fill="none" stroke="#f4f4ee" stroke-width="2.4"><circle cx="8.5" cy="17.5" r="6"/><path d="M12.8 13.2 L23.5 2.5"/><path d="M17.5 8.5 L21.5 12.5 L24.5 9.5 L20.5 5.5"/></g></svg>
<div class="t" style="left:1830.70px;top:1507.08px;font-size:22px;letter-spacing:-0.368px;color:#f8f8f2;">0|ReJSON-RL|JSON</div>
<svg class="s" style="left:2042.60px;top:1509.00px;" width="17" height="17" viewBox="0 0 17 17"><path d="M2.5 2.5 L13.5 13.5 M13.5 2.5 L2.5 13.5" stroke="#f4f4ee" stroke-width="2"/></svg>
<svg class="s" style="left:2097.00px;top:1503.00px;" width="28" height="28" viewBox="0 0 28 28"><g fill="none" stroke="#f4f4ee" stroke-width="2.4"><circle cx="8.5" cy="17.5" r="6"/><path d="M12.8 13.2 L23.5 2.5"/><path d="M17.5 8.5 L21.5 12.5 L24.5 9.5 L20.5 5.5"/></g></svg>
<div class="t" style="left:2131.00px;top:1507.08px;font-size:22px;letter-spacing:0.179px;color:#f8f8f2;">0|Stream|Stream</div>
<svg class="s" style="left:2311.00px;top:1509.00px;" width="17" height="17" viewBox="0 0 17 17"><path d="M2.5 2.5 L13.5 13.5 M13.5 2.5 L2.5 13.5" stroke="#f4f4ee" stroke-width="2"/></svg>
<svg class="s" style="left:2370.00px;top:1504.00px;" width="22" height="14" viewBox="0 0 22 14"><path d="M3 3 L19 3 L11 11Z" fill="#f4f4ee"/></svg>
<svg class="s" style="left:2318.00px;top:1526.00px;" width="85" height="21" viewBox="0 0 85 21"><ellipse cx="18" cy="11" rx="15" ry="10" fill="#e8232a"/>
<text x="6" y="16" font-family="Liberation Sans" font-style="italic" font-size="13" fill="#fff">php</text>
<g fill="none" stroke="#000" stroke-width="1.6"><path d="M38 8 H50 V15 H38Z M44 4 V19"/><path d="M54 7 H67 M58 5 L59 7 M56 8 Q60 16 67 18 M65 8 Q61 16 54 18"/><path d="M70 5 V18 M70 5 H84 V18 M73 8 L77 14 M77 8 L73 14 M79 8 L83 14 M83 8 L79 14"/></g></svg>
</body></html>
